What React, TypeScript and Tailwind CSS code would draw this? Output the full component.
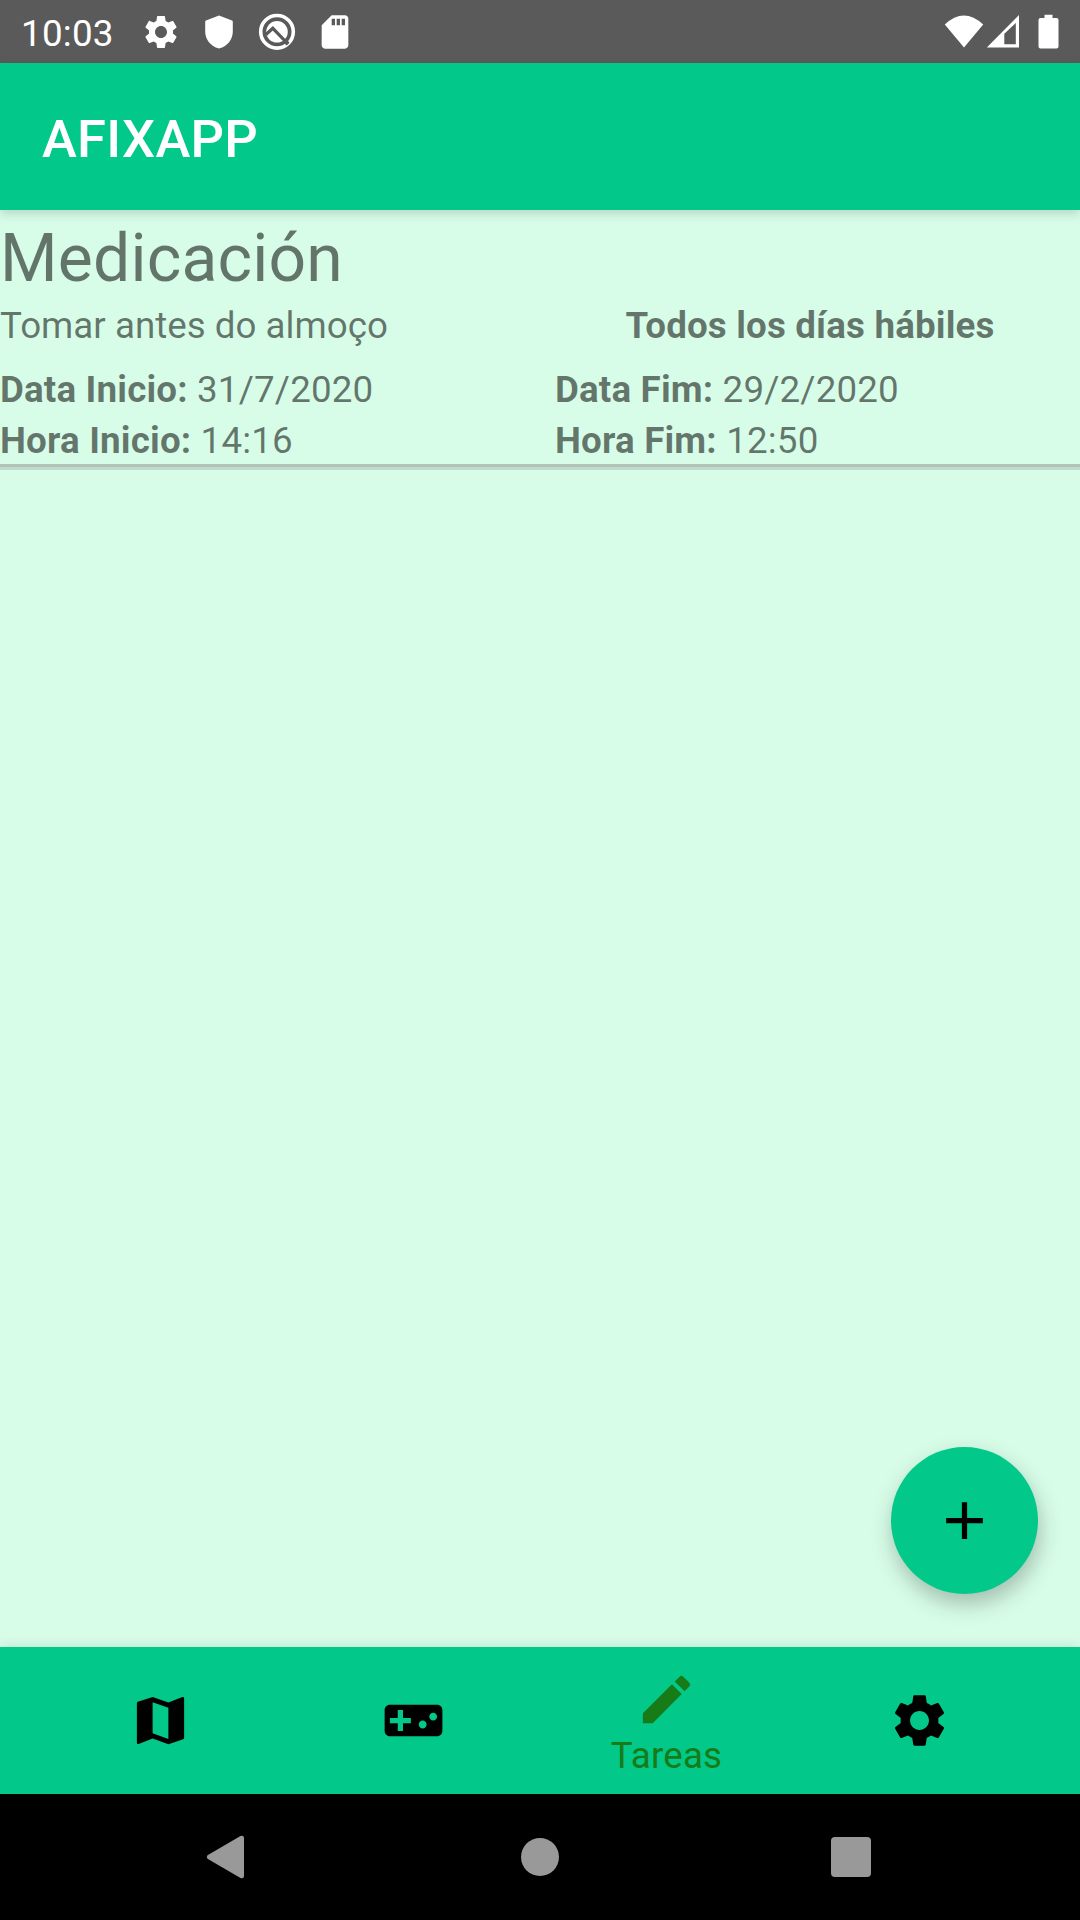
import React from "react";
import { MdSettings, MdSdCard, MdMap, MdVideogameAsset, MdEdit, MdAdd } from "react-icons/md";

function StatusBar() {
  return (
    <header className="flex h-[63px] shrink-0 items-center bg-[#5a5a5a] text-white">
      <span className="ml-[21px] w-[120px] pt-[3px] text-[36.75px] leading-[43px] tracking-[0.25px]">10:03</span>
      <div className="flex items-center">
        <MdSettings className="size-10" />
        <svg className="ml-[18px] size-10" viewBox="0 0 40 40" fill="currentColor">
          <path d="M20 3.6 33 8.6Q33.8 9 33.8 10V19.5C33.8 27 29 34 20 36.6 11 34 6.2 27 6.2 19.5V10Q6.2 9 7 8.6Z" />
        </svg>
        <svg className="ml-[18px] size-10" viewBox="0 0 40 40" fill="none">
          <circle cx="20" cy="19.800" r="16.3" stroke="currentColor" strokeWidth="3.600" />
          <circle cx="20" cy="19.800" r="10.8" fill="currentColor" />
          <path d="M9 22.500 15.800 16.300 31 32" stroke="#5a5a5a" strokeWidth="3.200" />
          <path d="M27 28 31 32" stroke="#5a5a5a" strokeWidth="4" />
        </svg>
        <MdSdCard className="ml-[18px] size-10" />
      </div>
      <div className="ml-auto mr-[21px] flex items-center">
        <svg className="h-[35px] w-[40px]" viewBox="0 0 40 35" fill="currentColor">
          <path d="M.8 10.5Q19.8-7.5 39.2 10.5L20 33.5Z" />
        </svg>
        <svg className="ml-[2px] h-[35px] w-[34px]" viewBox="0 0 34 35">
          <path d="M.8 33.5 33 1V33.5ZM18.3 19.8V30.2H29.8V9Z" fill="currentColor" fillRule="evenodd" />
        </svg>
        <svg className="ml-[18px] h-[35px] w-[21px]" viewBox="0 0 21 35" fill="currentColor">
          <path d="M6.5.8h8V4H18.500Q20.500 4 20.500 6V32.500Q20.500 34.500 18.500 34.500H2.500Q.5 34.500.5 32.500V6Q.5 4 2.500 4H6.500Z" />
        </svg>
      </div>
    </header>
  );
}

function Field({ label, value }: { label: string; value: string }) {
  return (
    <p className="leading-[48px] tracking-[0.16px]">
      <b>{label}</b> {value}
    </p>
  );
}

function TaskCard() {
  return (
    <article className="pt-[10px] text-[36.75px] text-black/54">
      <h2 className="text-[66px] leading-[77px] tracking-[0.2px]">Medicación</h2>
      <div className="mt-[4px] grid grid-cols-2 leading-[49px]">
        <p>Tomar antes do almoço</p>
        <p className="text-center font-bold tracking-[0.15px]">Todos los días hábiles</p>
      </div>
      <div className="mt-[16px] -mb-px grid grid-cols-[555px_1fr] gap-y-[3px]">
        <Field label="Data Inicio:" value="31/7/2020" />
        <Field label="Data Fim:" value="29/2/2020" />
        <Field label="Hora Inicio:" value="14:16" />
        <Field label="Hora Fim:" value="12:50" />
      </div>
      <div className="h-[6px] border-t-[3px] border-[#b4c3b9] bg-[#bddccb]" />
    </article>
  );
}

export default function App() {
  return (
    <div className="relative flex h-[1920px] w-[1080px] flex-col overflow-hidden bg-[#d7fde8] font-[Roboto,sans-serif]">
      <StatusBar />
      <div className="flex h-[147px] shrink-0 items-center bg-[#02c98a] pl-[42px] shadow-[0_4px_10px_rgba(0,0,0,0.15)]">
        <h1 className="pt-[4px] text-[52.5px] leading-[62px] font-medium tracking-[0.3px] text-white">AFIXAPP</h1>
      </div>
      <main className="flex-1">
        <TaskCard />
      </main>
      <button className="absolute top-[1447px] left-[891px] flex size-[147px] items-center justify-center rounded-full bg-[#02c98a] text-black shadow-[2px_10px_22px_rgba(0,0,0,0.25)]">
        <MdAdd className="size-[63px]" />
      </button>
      <nav className="flex h-[147px] shrink-0 justify-center bg-[#02c98a] text-black shadow-[0_0_12px_rgba(0,0,0,0.12)]">
        <div className="flex w-[253px] items-center justify-center"><MdMap className="size-[63px]" /></div>
        <div className="flex w-[253px] items-center justify-center"><MdVideogameAsset className="size-[63px]" /></div>
        <div className="flex w-[253px] flex-col items-center pt-[21px] text-[#177c17]">
          <MdEdit className="size-[63px]" />
          <span className="mt-[3px] text-[36.75px] leading-[43px] tracking-[0.15px]">Tareas</span>
        </div>
        <div className="flex w-[253px] items-center justify-center"><MdSettings className="size-[63px]" /></div>
      </nav>
      <footer className="flex h-[126px] shrink-0 items-center bg-black text-[#999999]">
        <svg className="ml-[206px] h-[44px] w-[38px]" viewBox="0 0 38 44" fill="currentColor">
          <path d="M1.500 20.200 34.500 1Q38 0 38 3V41Q38 44 34.500 43L1.500 23.800Q0 22 1.500 20.200Z" />
        </svg>
        <div className="ml-[277px] size-[38px] rounded-full bg-[#999999]" />
        <div className="ml-[272px] size-[40px] rounded-[4px] bg-[#999999]" />
      </footer>
    </div>
  );
}
